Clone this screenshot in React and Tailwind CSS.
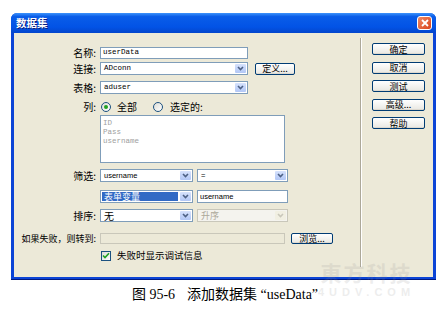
import React from "react";

const CJK = "font-['Noto_Sans_CJK_SC','Noto_Sans',sans-serif]";

function Arrow({ disabled }) {
  return (
    <div
      className={`flex h-full w-[11px] shrink-0 items-center justify-center rounded-[1px] ${
        disabled ? "bg-[#f1efe2]" : "bg-[linear-gradient(to_bottom,#d6e2fc,#b2c7f6)]"
      }`}
    >
      <svg width="7" height="5" viewBox="0 0 7 5">
        <path
          d="M1 1 L3.5 3.5 L6 1"
          fill="none"
          stroke={disabled ? "#c9c7ba" : "#4d6185"}
          strokeWidth="1.6"
        />
      </svg>
    </div>
  );
}

function Combo({ className, text, textClass, highlight, disabled }) {
  return (
    <div
      className={`flex h-[13px] items-stretch border p-[1px] ${
        disabled ? "border-[#c9c7ba] bg-[#f4f3ee]" : "border-[#7f9db9] bg-white"
      } ${className}`}
    >
      <div className="flex min-w-0 flex-1 items-center pr-[2px]">
        <div
          className={`flex h-full items-center whitespace-nowrap px-[2px] leading-none ${
            highlight ? "w-[76px] bg-[#316ac5] text-white" : ""
          } ${textClass}`}
        >
          {text}
        </div>
      </div>
      <Arrow disabled={disabled} />
    </div>
  );
}

function Btn({ className, children }) {
  return (
    <div
      className={`flex items-center justify-center whitespace-nowrap rounded-[2px] border border-[#003c74] bg-[linear-gradient(to_bottom,#ffffff,#ecebe6_85%,#d6d0c5)] text-[9px] leading-none text-black ${CJK} ${className}`}
    >
      {children}
    </div>
  );
}

function Label({ children, small }) {
  return (
    <div
      className={`w-[83px] shrink-0 whitespace-nowrap pr-[1px] text-right ${
        small ? "text-[9px]" : "text-[10px]"
      } leading-none text-black ${CJK}`}
    >
      {children}
    </div>
  );
}

function Radio({ checked }) {
  return (
    <div className="flex h-[10px] w-[10px] items-center justify-center rounded-full border border-[#1c5180] bg-[linear-gradient(135deg,#dcdcd6,#ffffff)]">
      {checked && <div className="h-[4px] w-[4px] rounded-full bg-[#21a121]" />}
    </div>
  );
}

export default function App() {
  const mono = "font-['Liberation_Mono',monospace] text-[7.5px]";
  const sans = "font-['Liberation_Sans',sans-serif] text-[7.5px]";
  return (
    <div className="relative h-[313px] w-[447px] overflow-hidden bg-white">
      <div className="ml-[11px] mt-[13px] flex h-[267px] w-[425px] flex-col rounded-t-[6px] border-b border-[#001a80] bg-[#0b44d6] px-[3px] pb-[2px]">
        {/* title bar */}
        <div className="-mx-[3px] flex h-[20px] shrink-0 items-center justify-between rounded-t-[6px] bg-[linear-gradient(to_bottom,#3d93fb_0%,#0a5de8_18%,#0253e6_70%,#0446cc_100%)] pl-[5px] pr-[4px]">
          <span
            className={`text-[10.5px] font-bold leading-none text-white [text-shadow:1px_1px_0_#0a1e80] ${CJK}`}
          >
            数据集
          </span>
          <div className="flex h-[14px] w-[15px] items-center justify-center rounded-[3px] border border-white bg-[linear-gradient(135deg,#f08a64,#d9431c)]">
            <svg width="8" height="8" viewBox="0 0 8 8">
              <path d="M1 1 L7 7 M7 1 L1 7" stroke="white" strokeWidth="1.8" />
            </svg>
          </div>
        </div>

        {/* client */}
        <div className="flex flex-1 bg-[#ece9d8]">
          {/* left panel */}
          <div className="flex w-[346px] shrink-0 flex-col">
            {/* 名称 */}
            <div className="mt-[14px] flex h-[12px] items-center">
              <Label>名称:</Label>
              <div className={`ml-[3px] flex h-[12px] w-[148px] items-center border border-[#7f9db9] bg-white px-[2px] leading-none ${mono}`}>
                userData
              </div>
            </div>
            {/* 连接 */}
            <div className="mt-[3px] flex h-[13px] items-center">
              <Label>连接:</Label>
              <Combo className="ml-[3px] w-[148px]" text="ADconn" textClass={mono} />
              <Btn className="ml-[7px] h-[12px] w-[40px]">定义...</Btn>
            </div>
            {/* 表格 */}
            <div className="mt-[6px] flex h-[13px] items-center">
              <Label>表格:</Label>
              <Combo className="ml-[3px] w-[148px]" text="aduser" textClass={mono} />
            </div>
            {/* 列 */}
            <div className={`mt-[7px] flex h-[12px] items-center text-[10px] leading-none ${CJK}`}>
              <Label>列:</Label>
              <div className="ml-[4px]">
                <Radio checked />
              </div>
              <span className="ml-[6px]">全部</span>
              <div className="ml-[16px]">
                <Radio />
              </div>
              <span className="ml-[7px]">选定的:</span>
            </div>
            {/* list */}
            <div className="ml-[86px] mt-[2px] flex h-[48px] w-[185px] flex-col border border-[#7f9db9] bg-white px-[2px] pt-[3px]">
              {["ID", "Pass", "username"].map((t) => (
                <div key={t} className={`h-[9px] leading-[9px] text-[#a0a0a0] ${mono}`}>
                  {t}
                </div>
              ))}
            </div>
            {/* 筛选 */}
            <div className="mt-[6px] flex h-[13px] items-center">
              <Label>筛选:</Label>
              <Combo className="ml-[3px] w-[93px]" text="username" textClass={sans} />
              <Combo className="ml-[4px] w-[91px]" text="=" textClass={sans} />
            </div>
            {/* row2 */}
            <div className="mt-[8px] flex h-[13px] items-center">
              <div className="w-[83px] shrink-0" />
              <Combo
                className="ml-[3px] w-[93px]"
                text="表单变量"
                highlight
                textClass={`text-[9px] ${CJK}`}
              />
              <div className={`ml-[4px] flex h-[13px] w-[91px] items-center border border-[#7f9db9] bg-white px-[2px] leading-none ${sans}`}>
                username
              </div>
            </div>
            {/* 排序 */}
            <div className="mt-[6px] flex h-[13px] items-center">
              <Label>排序:</Label>
              <Combo className="ml-[3px] w-[93px]" text="无" textClass={`text-[10px] ${CJK}`} />
              <Combo
                className="ml-[4px] w-[91px]"
                text="升序"
                disabled
                textClass={`text-[9px] text-[#aca899] ${CJK}`}
              />
            </div>
            {/* 如果失败 */}
            <div className="mt-[11px] flex h-[11px] items-center">
              <Label small>如果失败，则转到:</Label>
              <div className="ml-[3px] h-[11px] w-[185px] border border-[#c9c7ba] bg-[#ece9d8]" />
              <Btn className="ml-[6px] h-[11px] w-[42px]">浏览...</Btn>
            </div>
            {/* checkbox */}
            <div className={`mt-[6px] flex h-[11px] items-center text-[9.5px] leading-none ${CJK}`}>
              <div className="ml-[87px] flex h-[10px] w-[10px] items-center justify-center border border-[#1c5180] bg-[linear-gradient(135deg,#dcdcd6,#ffffff)]">
                <svg width="8" height="7" viewBox="0 0 8 7">
                  <path d="M1 3.5 L3 5.5 L7 1.2" fill="none" stroke="#21a121" strokeWidth="1.6" />
                </svg>
              </div>
              <span className="ml-[6px]">失败时显示调试信息</span>
            </div>
          </div>
          {/* separator */}
          <div className="mb-[10px] mt-[5px] w-[2px] shrink-0 border-l border-r border-l-[#aca899] border-r-white" />
          {/* right buttons */}
          <div className="flex flex-col gap-[6.5px] pl-[10px] pt-[10px]">
            <Btn className="h-[12px] w-[53px]">确定</Btn>
            <Btn className="h-[12px] w-[53px]">取消</Btn>
            <Btn className="h-[12px] w-[53px]">测试</Btn>
            <Btn className="h-[12px] w-[53px]">高级...</Btn>
            <Btn className="h-[12px] w-[53px]">帮助</Btn>
          </div>
        </div>
      </div>

      {/* caption */}
      <div className="mt-[8px] flex justify-center text-[14px] leading-none text-black">
        <span className="ml-[3px] font-['Liberation_Serif','Noto_Sans_CJK_SC',serif]">
          图 95-6
          <span className="ml-[12px]">添加数据集 “useData”</span>
        </span>
      </div>

      {/* watermark */}
      <div className="pointer-events-none absolute left-[318px] top-[261px] flex flex-col items-center gap-[3px] opacity-15">
        <span className={`text-[21px] font-bold leading-[22px] tracking-[2px] text-[#8a8a8a] ${CJK}`}>東方科技</span>
        <span className="font-['Liberation_Sans',sans-serif] text-[11px] font-bold leading-[12px] tracking-[5px] text-[#8a8a8a]">
          4UDV.COM
        </span>
      </div>
    </div>
  );
}
